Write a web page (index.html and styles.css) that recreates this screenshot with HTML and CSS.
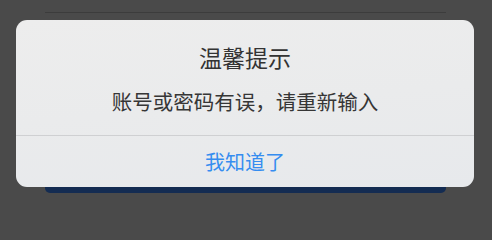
FILE: index.html
```html
<!DOCTYPE html>
<html lang="zh-CN">
<head>
<meta charset="utf-8">
<link rel="stylesheet" href="styles.css">
</head>
<body>
<div class="screen">
  <div class="page">
    <div class="page-body"></div>
    <div class="page-button"></div>
  </div>
  <div class="dialog">
    <div class="dialog-title">温馨提示</div>
    <div class="dialog-message">账号或密码有误，请重新输入</div>
    <div class="dialog-actions">
      <div class="dialog-button">我知道了</div>
    </div>
  </div>
</div>
</body>
</html>
```
FILE: styles.css
```css
html, body {
  margin: 0;
  padding: 0;
}
body {
  width: 492px;
  height: 212px;
  background: #4a4a4a;
  font-family: "Noto Sans CJK SC", "Noto Sans", sans-serif;
  overflow: hidden;
}
.screen {
  position: relative;
  width: 492px;
  height: 212px;
  padding-top: 12px;
  box-sizing: border-box;
}
.page {
  margin: 0 46px 0 45px;
  height: 181px;
  border-top: 1px solid #3c3c3c;
  display: flex;
  flex-direction: column;
  box-sizing: border-box;
}
.page-body {
  flex: 1;
}
.page-button {
  height: 40px;
  background: #142c52;
  border-radius: 0 0 5px 5px;
}
.dialog {
  position: absolute;
  left: 16px;
  top: 20px;
  width: 458px;
  height: 167px;
  border-radius: 11px;
  background: linear-gradient(175deg, #ededed 0%, #eaebec 50%, #e7e9ec 100%);
  display: flex;
  flex-direction: column;
  box-sizing: border-box;
  overflow: hidden;
}
.dialog-title {
  padding-top: 22px;
  font-size: 23px;
  line-height: 30px;
  color: #333333;
  text-align: center;
}
.dialog-message {
  padding-top: 15px;
  padding-bottom: 20px;
  font-size: 20.5px;
  line-height: 28px;
  color: #363636;
  text-align: center;
}
.dialog-actions {
  border-top: 1px solid #cfd0d2;
  flex: 1;
  display: flex;
  align-items: center;
  justify-content: center;
}
.dialog-button {
  font-size: 20px;
  line-height: 28px;
  color: #358df0;
}
```
